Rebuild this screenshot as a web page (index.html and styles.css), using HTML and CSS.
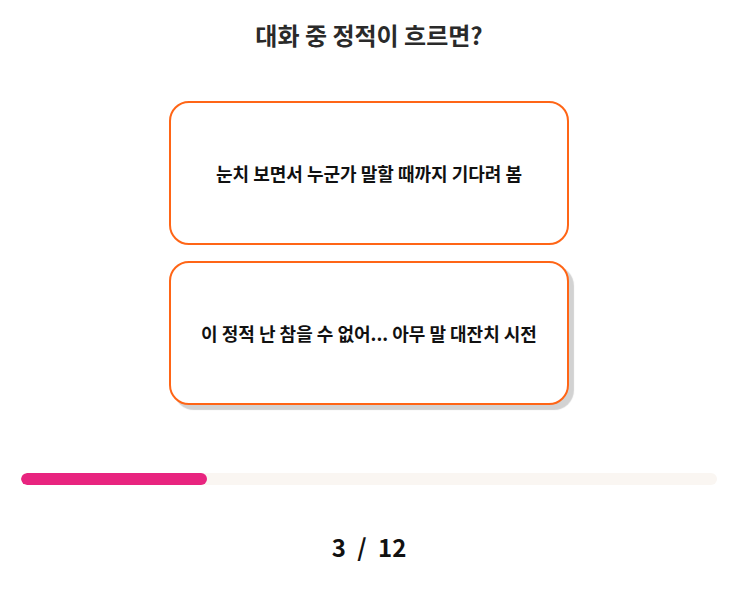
FILE: index.html
```html
<!doctype html>
<html>
<head>
<meta charset="utf-8">
<title>대화 중 정적이 흐르면?</title>
<link rel="stylesheet" href="styles.css">
</head>
<body>
<div class="quiz">
	<h1 class="question">대화 중 정적이 흐르면?</h1>
	<div class="answers">
		<div class="answer">눈치 보면서 누군가 말할 때까지 기다려 봄</div>
		<div class="answer answer-hover">이 정적 난 참을 수 없어... 아무 말 대잔치 시전</div>
	</div>
	<div class="progress">
		<div class="progress-bar" style="width:26.7%"></div>
	</div>
	<div class="count">3 / 12</div>
</div>
</body>
</html>
```

FILE: styles.css
```css
*{ margin:0; padding:0; box-sizing:border-box;}
body{ background:#fff; font-family:"Noto Sans CJK KR","Noto Sans",sans-serif; color:#111;}

.quiz{ display:flex; flex-direction:column; align-items:center; padding:20px 20px 0 21px;}
.question{ font-size:24px; line-height:30px; font-weight:bold; color:#2a2a2a;}

.answers{ display:flex; flex-direction:column; gap:16px; margin-top:51px;}
.answer{ display:flex; align-items:center; justify-content:center; width:400px; height:144px;
	border:2px solid #ff6516; border-radius:20px; background:#fff;
	font-size:18px; font-weight:bold; color:#111; text-align:center;}
.answer-hover{ box-shadow:5px 5px 1px #d2d2d2;}

.progress{ width:100%; height:12px; margin-top:68px; background:#faf6f2; border-radius:6px; overflow:hidden;}
.progress-bar{ height:100%; background:#e8247f; border-radius:6px;}

.count{ margin-top:47px; font-size:24px; line-height:30px; font-weight:bold; color:#111; word-spacing:6px;}
```
